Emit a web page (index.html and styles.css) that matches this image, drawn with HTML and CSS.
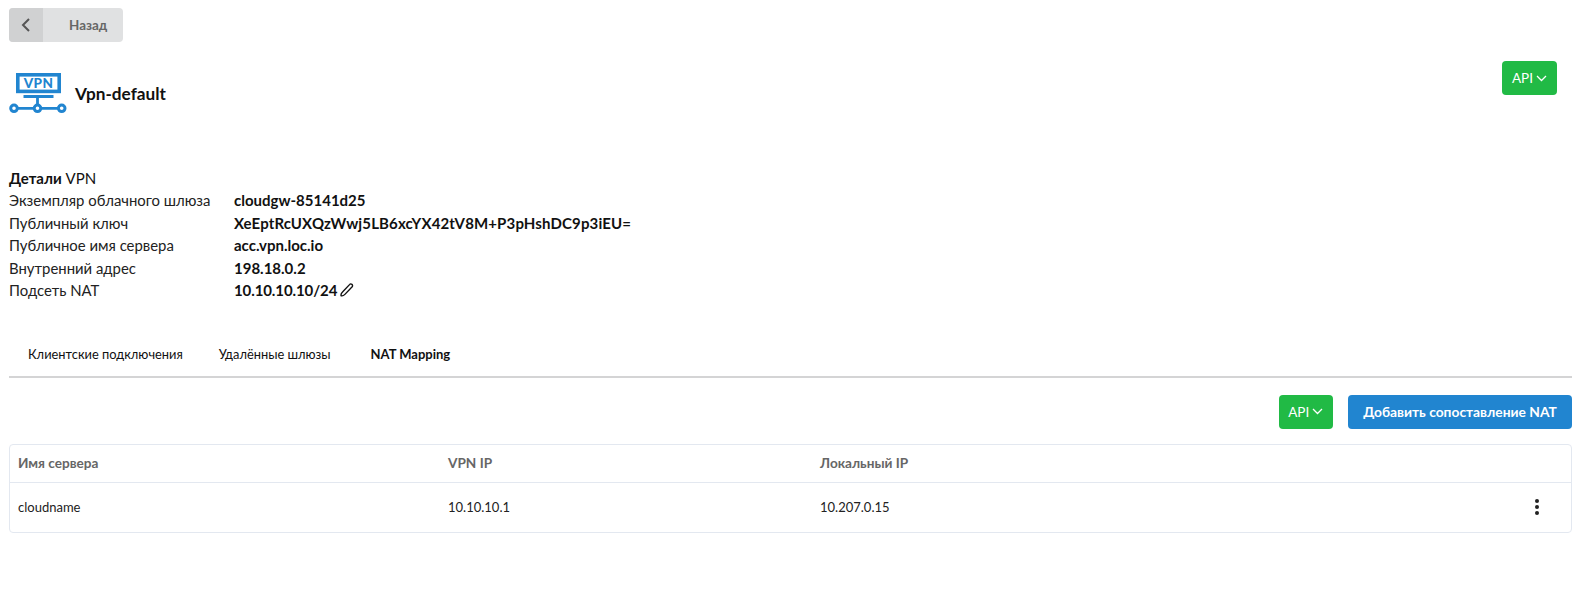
FILE: index.html
```html
<!DOCTYPE html>
<html lang="ru">
<head>
<meta charset="utf-8">
<title>Vpn-default</title>
<link rel="stylesheet" href="styles.css">
</head>
<body>
<main class="page">
  <a class="back" href="#">
    <span class="back-icon"><svg width="12" height="16" viewBox="0 0 12 16"><path d="M9 2 3 8l6 6" fill="none" stroke="#555" stroke-width="2"/></svg></span>
    <span class="back-label">Назад</span>
  </a>
  <header class="head">
    <div class="title-wrap">
      <svg class="vpn-icon" width="58" height="41" viewBox="0 0 58 41">
        <rect x="8.800" y="1.800" width="41.400" height="16.600" fill="none" stroke="#2185d0" stroke-width="3.600"/>
        <text x="29.500" y="15" class="vpn-text" text-anchor="middle">VPN</text>
        <path d="M14.500 23.500h30" stroke="#2185d0" stroke-width="3"/>
        <path d="M28.500 24v11.300M8 35.300h41" stroke="#2185d0" stroke-width="2.800"/>
        <circle cx="5" cy="35.300" r="3.300" fill="#fff" stroke="#2185d0" stroke-width="3"/>
        <circle cx="28.500" cy="35.300" r="3.300" fill="#fff" stroke="#2185d0" stroke-width="3"/>
        <circle cx="52.700" cy="35.300" r="3.300" fill="#fff" stroke="#2185d0" stroke-width="3"/>
      </svg>
      <h1>Vpn-default</h1>
    </div>
    <button class="btn api">API <svg width="11" height="7" viewBox="0 0 11 7"><path d="M1 1l4.500 4.500L10 1" fill="none" stroke="#fff" stroke-width="1.300"/></svg></button>
  </header>
  <section class="details">
    <h2><b>Детали</b> VPN</h2>
    <dl>
      <dt>Экземпляр облачного шлюза</dt><dd>cloudgw-85141d25</dd>
      <dt>Публичный ключ</dt><dd class="key">XeEptRcUXQzWwj5LB6xcYX42tV8M+P3pHshDC9p3iEU=</dd>
      <dt>Публичное имя сервера</dt><dd>acc.vpn.loc.io</dd>
      <dt>Внутренний адрес</dt><dd>198.18.0.2</dd>
      <dt>Подсеть NAT</dt><dd class="nat"><span>10.10.10.10/24</span><svg class="pencil" width="15" height="15" viewBox="0 0 14 14"><path d="M9.800 1.500a1.600 1.600 0 0 1 2.500 2L5.500 10.600c-1 1-2.500 1.700-3.500 1.300-.4-1 .3-2.500 1.300-3.500z" fill="none" stroke="#111" stroke-width="1.300"/></svg></dd>
    </dl>
  </section>
  <nav class="tabs">
    <a href="#">Клиентские подключения</a>
    <a href="#">Удалённые шлюзы</a>
    <a href="#" class="active">NAT Mapping</a>
  </nav>
  <div class="toolbar">
    <button class="btn api">API <svg width="11" height="7" viewBox="0 0 11 7"><path d="M1 1l4.500 4.500L10 1" fill="none" stroke="#fff" stroke-width="1.300"/></svg></button>
    <button class="btn primary">Добавить сопоставление NAT</button>
  </div>
  <div class="table">
    <div class="row thead">
      <span>Имя сервера</span><span>VPN IP</span><span>Локальный IP</span><span></span>
    </div>
    <div class="row">
      <span>cloudname</span><span>10.10.10.1</span><span>10.207.0.15</span>
      <span class="menu"><i></i><i></i><i></i></span>
    </div>
  </div>
</main>
</body>
</html>
```
FILE: styles.css
```css
* { box-sizing: border-box; }
html, body { margin: 0; padding: 0; background: #fff; }
body { font-family: Lato, "Noto Sans", sans-serif; font-size: 15px; color: #111; }
.page { padding: 8px 15px 0 9px; }

.back { display: flex; width: 114px; height: 34px; background: #e0e1e2; border-radius: 4px; overflow: hidden; text-decoration: none; }
.back-icon { width: 34px; background: #d0d1d2; display: flex; align-items: center; justify-content: center; }
.back-label { flex: 1; padding-left: 26px; line-height: 34px; font-size: 13.400px; font-weight: 700; color: #666; }

.head { display: flex; justify-content: space-between; align-items: flex-start; margin-top: 19px; margin-right: 15px; height: 106px; }
.title-wrap { display: flex; align-items: center; gap: 8px; margin-top: 12px; }
.vpn-icon { display: block; }
.vpn-text { font-family: Lato, sans-serif; font-weight: 900; font-size: 13.500px; fill: #2185d0; letter-spacing: .3px; }
h1 { margin: 0; font-size: 17.200px; font-weight: 700; line-height: 24px; color: #111; }

.btn { border: 0; border-radius: 4px; height: 34px; font-family: inherit; font-size: 13.800px; color: #fff; cursor: pointer; }
.api { width: 54.500px; padding: 0; background: #21ba45; display: flex; align-items: center; justify-content: center; gap: 3px; font-size: 13.500px; }
.head .api { width: 55px; }
.primary { width: 224px; padding: 0; background: #2185d0; font-weight: 700; }

.details h2 { margin: 0; font-size: 15px; font-weight: 400; line-height: 22px; color: #111; }
.details h2 b { font-weight: 700; }
dl { margin: 0; display: grid; grid-template-columns: 225px 1fr; grid-auto-rows: 22.500px; line-height: 22px; }
dt { color: #222; font-size: 14.900px; }
dd { margin: 0; font-weight: 700; color: #111; }
.key { letter-spacing: .14px; }
.nat { display: flex; align-items: center; gap: 2px; height: 22px; letter-spacing: -.1px; }
.pencil { display: block; flex: none; }

.tabs { display: flex; margin-top: 30px; height: 46px; border-bottom: 2px solid #d4d4d5; padding-left: 1px; }
.tabs a { padding: 0 18px; line-height: 44px; font-size: 12.850px; color: #111; text-decoration: none; }
.tabs a.active { font-weight: 700; font-size: 13px; padding-left: 22px; }

.toolbar { display: flex; justify-content: flex-end; gap: 15px; margin-top: 17px; }

.table { margin-top: 15px; border: 1px solid #e3e8f0; border-radius: 4px; }
.row { display: grid; grid-template-columns: 430px 372px 1fr 43px; align-items: center; padding-left: 8px; height: 49px; font-size: 13px; color: #222; }
.thead { height: 38px; border-bottom: 1px solid #e3e8f0; font-weight: 700; font-size: 13.600px; color: #666; }
.menu { display: flex; flex-direction: column; align-items: center; gap: 2px; width: 18px; }
.menu i { display: block; width: 4px; height: 4px; border-radius: 50%; background: #222; }
```
